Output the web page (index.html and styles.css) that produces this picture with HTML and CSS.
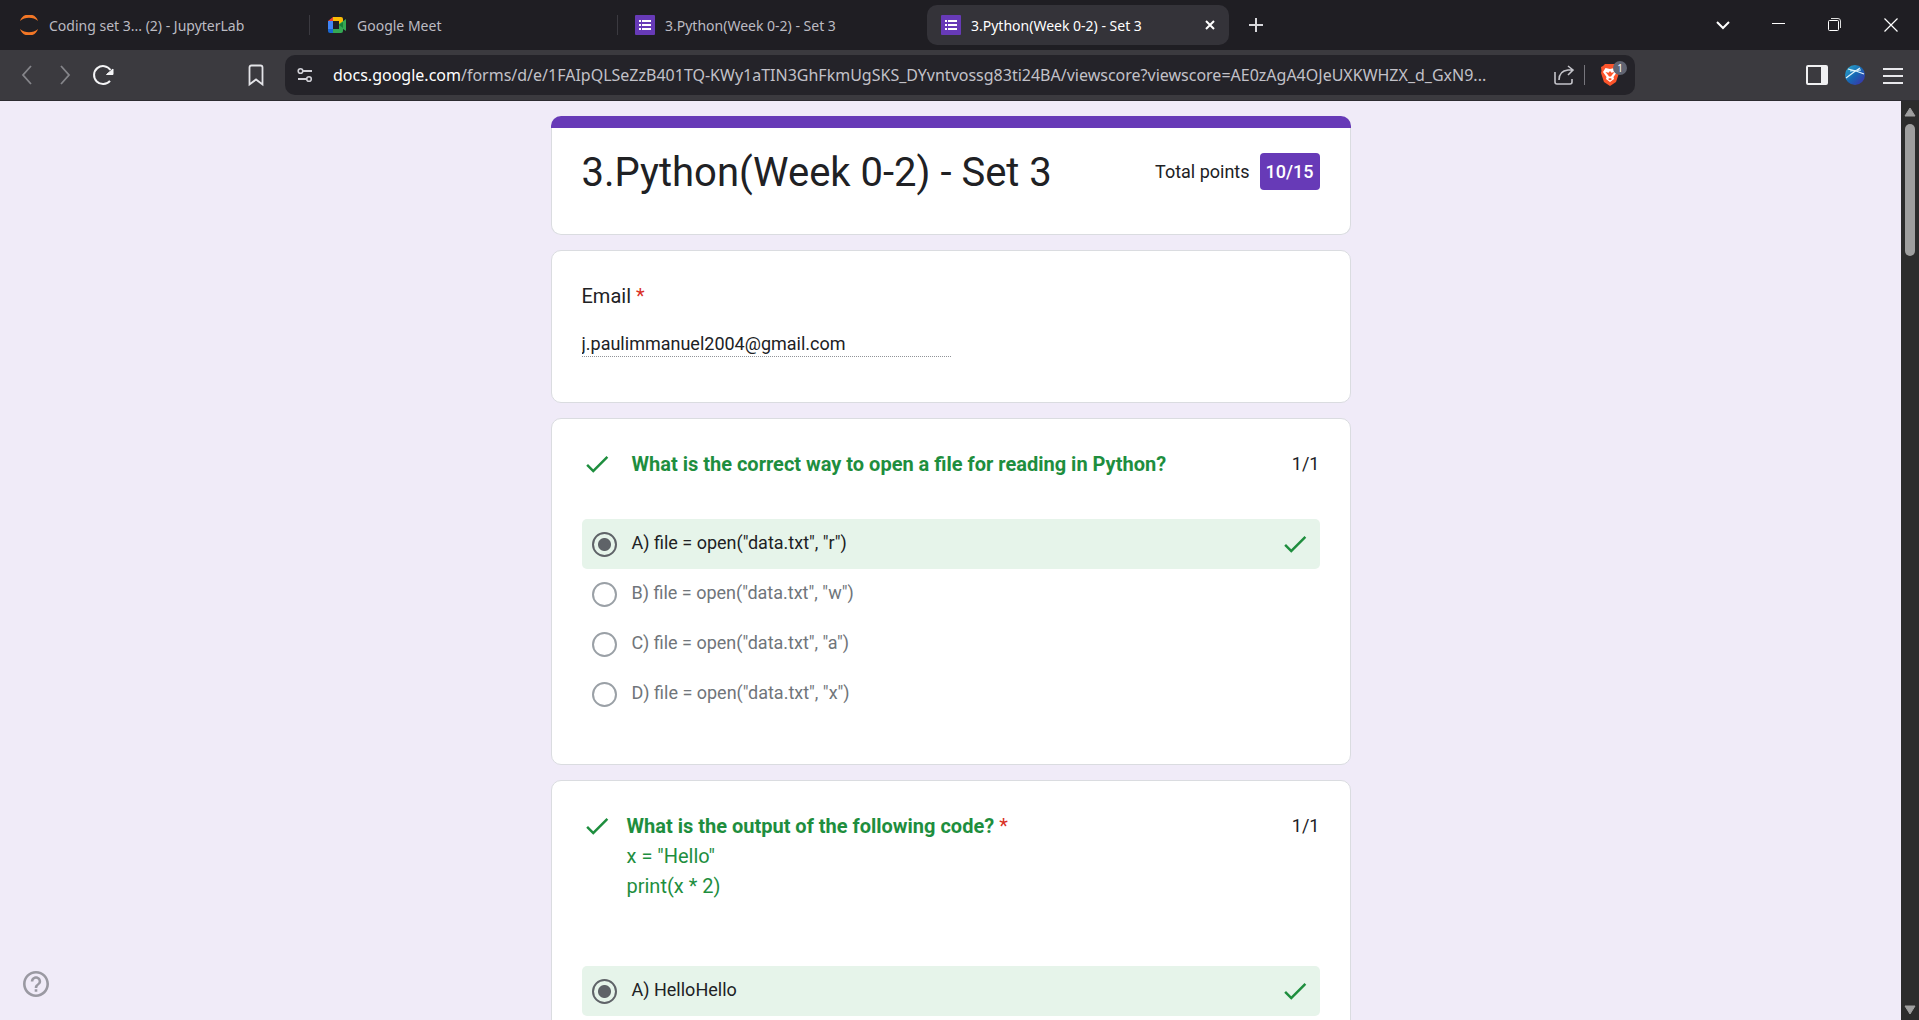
FILE: index.html
```html
<!DOCTYPE html>
<html lang="en">
<head>
<meta charset="utf-8">
<title>3.Python(Week 0-2) - Set 3</title>
<link rel="stylesheet" href="styles.css">
</head>
<body>
<svg class="defs" aria-hidden="true">
  <symbol id="form-icon" viewBox="0 0 20 20">
    <rect width="20" height="20" rx="1" fill="#673ab7"/>
    <path d="M7 5h9v2H7zM7 9h9v2H7zM7 13h9v2H7z" fill="#fff"/>
    <path d="M4 5h2v2H4zM4 9h2v2H4zM4 13h2v2H4z" fill="#fff"/>
  </symbol>
  <symbol id="check" viewBox="0 0 24 24">
    <path d="M9 16.2L4.8 12l-1.4 1.4L9 19 21 7l-1.4-1.4L9 16.2z" fill="#1e8e3e"/>
  </symbol>
</svg>

<header class="browser">
  <div class="tab-strip">
    <nav class="tabs" aria-label="Open tabs">
      <a class="tab" href="#">
        <svg class="favicon" viewBox="0 0 20 20"><path d="M1 6a9.500 9.500 0 0 1 18 0a14 14 0 0 0-18 0zM1 14a9.500 9.500 0 0 0 18 0a14 14 0 0 1-18 0z" fill="#f37726"/></svg>
        <span>Coding set 3... (2) - JupyterLab</span>
      </a>
      <a class="tab divided" href="#">
        <svg class="favicon" viewBox="0 0 20 20"><path d="M1 6l5-4v4z" fill="#ea4335"/><path d="M6 2h8a2 2 0 0 1 2 2v6l-4-1V6H6z" fill="#fbbc04"/><path d="M1 6h5v8H1z" fill="#4285f4"/><path d="M1 14h5v4H3a2 2 0 0 1-2-2z" fill="#1967d2"/><path d="M6 14h6V9l7-5v12l-3-2v2a2 2 0 0 1-2 2H6z" fill="#34a853"/><path d="M12 10l4-3v6z" fill="#188038"/></svg>
        <span>Google Meet</span>
      </a>
      <a class="tab divided" href="#">
        <svg class="favicon"><use href="#form-icon"/></svg>
        <span>3.Python(Week 0-2) - Set 3</span>
      </a>
      <div class="tab active">
        <svg class="favicon"><use href="#form-icon"/></svg>
        <span>3.Python(Week 0-2) - Set 3</span>
        <button class="icon-button close-tab" aria-label="Close tab"><svg viewBox="0 0 10 10"><path d="M1 1l8 8M9 1l-8 8" stroke="#fff" stroke-width="2"/></svg></button>
      </div>
      <button class="icon-button new-tab" aria-label="New tab"><svg viewBox="0 0 14 14"><path d="M7 0v14M0 7h14" stroke="#d8d8dc" stroke-width="2"/></svg></button>
    </nav>
    <div class="window-controls">
      <button class="icon-button" aria-label="Search tabs"><svg viewBox="0 0 14 14"><path d="M1 4l6 6 6-6" fill="none" stroke="#fff" stroke-width="2"/></svg></button>
      <button class="icon-button" aria-label="Minimize"><svg viewBox="0 0 14 14"><path d="M0 5.500h13" stroke="#fff"/></svg></button>
      <button class="icon-button" aria-label="Restore"><svg viewBox="0 0 14 14"><rect x=".5" y="2.500" width="10" height="10" rx="1" fill="none" stroke="#fff"/><path d="M3 .5h7q2.500 0 2.500 2.500v7" fill="none" stroke="#ddd"/></svg></button>
      <button class="icon-button" aria-label="Close window"><svg viewBox="0 0 14 14"><path d="M.5.5l13 13M13.500.5l-13 13" stroke="#fff" stroke-width="1.200"/></svg></button>
    </div>
  </div>

  <div class="toolbar">
    <div class="history">
      <button class="icon-button" aria-label="Back"><svg viewBox="0 0 20 20"><path d="M14 1L6 10l8 9" fill="none" stroke="#85858a" stroke-width="1.800"/></svg></button>
      <button class="icon-button" aria-label="Forward"><svg viewBox="0 0 20 20"><path d="M6 1l8 9-8 9" fill="none" stroke="#85858a" stroke-width="1.800"/></svg></button>
      <button class="icon-button" aria-label="Reload"><svg viewBox="0 0 20 20"><path d="M17 15.800A9 9 0 1 1 17.500 5" fill="none" stroke="#f4f4f6" stroke-width="2"/><path d="M20 4v5.500h-6.500z" fill="#f4f4f6" stroke="#f4f4f6" stroke-linejoin="round"/></svg></button>
      <button class="icon-button bookmark" aria-label="Bookmark"><svg viewBox="0 0 20 20"><path d="M3.500 2.500q0-2 2-2h9q2 0 2 2v17l-6.500-5-6.500 5z" fill="none" stroke="#e4e4e8" stroke-width="1.800"/></svg></button>
    </div>
    <div class="address">
      <button class="icon-button site" aria-label="Site information"><svg viewBox="0 0 16 16"><path d="M6 4h9M1 12h8" stroke="#d0d0d6" stroke-width="1.800"/><circle cx="3.500" cy="4" r="2.300" fill="none" stroke="#d0d0d6" stroke-width="1.600"/><circle cx="12" cy="12" r="2.300" fill="none" stroke="#d0d0d6" stroke-width="1.600"/></svg></button>
      <div class="url"><span class="host">docs.google.com</span>/forms/d/e/1FAIpQLSeZzB401TQ-KWy1aTIN3GhFkmUgSKS_DYvntvossg83ti24BA/viewscore?viewscore=AE0zAgA4OJeUXKWHZX_d_GxN9...</div>
      <button class="icon-button" aria-label="Share"><svg viewBox="0 0 20 20"><path d="M1 7v10q0 2 2 2h13q2 0 2-2v-3M5 15q0-9 9-10h4M14 1l5 4-5 5" fill="none" stroke="#c4c4ca" stroke-width="1.600"/></svg></button>
      <span class="rule"></span>
      <button class="icon-button shield" aria-label="Brave Shields"><svg viewBox="0 0 20 22"><path d="M5 0h10l2 2 2 1-.5 4 .5 2-3 9-6 4-6-4-3-9 .5-2L1 3l2-1z" fill="#fb542b"/><path d="M5.500 4L10 5l4.500-1L17 8l-3.500 5 .5 2-4 3-4-3 .5-2L3 8z" fill="#fff"/><path d="M5.500 8l3 .8L10 7l1.500 1.800 3-.8-2.500 3-1 1.500h-2L8 11zM8 15l2-1 2 1-2 1.500z" fill="#fb542b"/></svg><span class="badge">1</span></button>
    </div>
    <div class="tools">
      <button class="icon-button" aria-label="Sidebar"><svg viewBox="0 0 20 20"><rect x="0" y="1" width="20" height="18" rx="1" fill="none" stroke="#f0f0f2" stroke-width="2"/><path d="M14 1h6v18h-6z" fill="#f0f0f2"/></svg></button>
      <button class="icon-button" aria-label="Profile"><svg viewBox="0 0 20 20"><defs><linearGradient id="globe" x1="0" y1="0" x2="1" y2="1"><stop offset="0" stop-color="#2fb0d0"/><stop offset=".5" stop-color="#1768b4"/><stop offset="1" stop-color="#4328a8"/></linearGradient></defs><circle cx="10" cy="10" r="10" fill="url(#globe)"/><path d="M3 4l8 2 8 3M1 13l8-6 6-4M5 6l11-1" fill="none" stroke="#dff3fa" stroke-width="1.200"/></svg></button>
      <button class="icon-button" aria-label="Menu"><svg viewBox="0 0 20 20"><path d="M0 4h20M0 11h20M0 18h20" stroke="#e8e8ec" stroke-width="2"/></svg></button>
    </div>
  </div>
</header>

<div class="viewport">
  <main class="page">
    <form class="form">
      <section class="card title-card">
        <h1>3.Python(Week 0-2) - Set 3</h1>
        <div class="score">Total points <strong>10/15</strong></div>
      </section>

      <section class="card email-card">
        <label class="question" for="email">Email <span class="required">*</span></label>
        <input id="email" class="email" type="email" value="j.paulimmanuel2004@gmail.com" readonly>
      </section>

      <section class="card">
        <div class="heading wide">
          <svg class="check"><use href="#check"/></svg>
          <h2>What is the correct way to open a file for reading in Python?</h2>
          <span class="points">1/1</span>
        </div>
        <div class="options">
          <label class="option correct"><input type="radio" name="q1" checked><span>A) file = open("data.txt", "r")</span><svg class="check"><use href="#check"/></svg></label>
          <label class="option"><input type="radio" name="q1"><span>B) file = open("data.txt", "w")</span></label>
          <label class="option"><input type="radio" name="q1"><span>C) file = open("data.txt", "a")</span></label>
          <label class="option"><input type="radio" name="q1"><span>D) file = open("data.txt", "x")</span></label>
        </div>
      </section>

      <section class="card">
        <div class="heading">
          <svg class="check"><use href="#check"/></svg>
          <div class="prompt">
            <h2>What is the output of the following code? <span class="required">*</span></h2>
            <p>x = "Hello"</p>
            <p>print(x * 2)</p>
          </div>
          <span class="points">1/1</span>
        </div>
        <div class="options after-code">
          <label class="option correct"><input type="radio" name="q2" checked><span>A) HelloHello</span><svg class="check"><use href="#check"/></svg></label>
        </div>
      </section>
    </form>
    <button class="icon-button help" aria-label="Help"><svg viewBox="2 2 20 20"><path fill="#9a99a2" d="M11 18h2v-2h-2v2zm1-16C6.480 2 2 6.480 2 12s4.480 10 10 10 10-4.480 10-10S17.520 2 12 2zm0 18c-4.410 0-8-3.590-8-8s3.590-8 8-8 8 3.590 8 8-3.590 8-8 8zm0-14c-2.210 0-4 1.790-4 4h2c0-1.100.9-2 2-2s2 .9 2 2c0 2-3 1.750-3 5h2c0-2.250 3-2.500 3-5 0-2.210-1.790-4-4-4z"/></svg></button>
  </main>
  <div class="scrollbar" aria-hidden="true">
    <svg viewBox="0 0 12 10"><path d="M6 1l5 8H1z" fill="#9f9f9f" stroke="#9f9f9f" stroke-linejoin="round"/></svg>
    <div class="thumb"></div>
    <svg viewBox="0 0 12 10"><path d="M6 9l5-8H1z" fill="#9f9f9f" stroke="#9f9f9f" stroke-linejoin="round"/></svg>
  </div>
</div>
</body>
</html>
```
FILE: styles.css
```css
* { box-sizing: border-box; }

body {
  margin: 0;
  height: 100vh;
  display: flex;
  flex-direction: column;
  overflow: hidden;
  font-family: Roboto, "Liberation Sans", sans-serif;
  color: #202124;
}

h1, h2, p { margin: 0; font-weight: 400; }

.defs { position: absolute; width: 0; height: 0; }

.icon-button {
  display: flex;
  align-items: center;
  justify-content: center;
  flex: none;
  width: 20px;
  height: 24px;
  padding: 0;
  border: 0;
  background: none;
}
.icon-button svg { width: 20px; height: 20px; overflow: visible; }

/* Browser frame */
.browser { flex: none; font-family: "Noto Sans", sans-serif; }

.tab-strip {
  display: flex;
  justify-content: space-between;
  height: 50px;
  padding: 5px 18px 5px 0;
  background: #1f1e23;
}
.tabs { display: flex; align-items: center; }
.tab {
  position: relative;
  display: flex;
  align-items: center;
  gap: 10px;
  width: 308px;
  height: 40px;
  padding: 0 14px 0 19px;
  color: #bcbbc2;
  font-size: 14px;
  text-decoration: none;
  white-space: nowrap;
}
.tab.divided::before {
  content: "";
  position: absolute;
  left: 1px;
  top: 10px;
  width: 1px;
  height: 20px;
  background: #3b3a40;
}
.tab.active {
  width: 302px;
  margin-left: 3px;
  padding-left: 14px;
  border-radius: 10px;
  background: #343339;
  color: #fff;
}
.favicon { flex: none; width: 20px; height: 20px; }
.close-tab { width: 10px; margin-left: auto; }
.close-tab svg { width: 10px; height: 10px; }
.new-tab { margin-left: 17px; }
.new-tab svg, .window-controls svg { width: 14px; height: 14px; }
.window-controls { display: flex; align-items: center; gap: 36px; }

.toolbar {
  display: flex;
  align-items: center;
  gap: 19px;
  height: 51px;
  padding: 0 16px 0 17px;
  border-bottom: 1px solid #2c2b30;
  background: #3b3a3f;
}
.history { display: flex; gap: 18px; flex: 1; }
.bookmark { margin-left: auto; }
.address {
  display: flex;
  align-items: center;
  flex: 0 1 1350px;
  min-width: 0;
  height: 40px;
  gap: 10px;
  padding: 0 7px 0 12px;
  border-radius: 10px;
  background: #242329;
}
.site { width: 16px; }
.site svg { width: 16px; height: 16px; }
.url {
  flex: 1;
  min-width: 0;
  padding-left: 10px;
  overflow: hidden;
  white-space: nowrap;
  color: #c2c1c8;
  font-size: 16px;
}
.host { color: #fff; }
.rule { width: 1px; height: 20px; margin-right: 5px; background: #77767d; }
.shield { position: relative; width: 28px; justify-content: flex-start; }
.shield svg { height: 22px; }
.badge {
  position: absolute;
  left: 13px;
  top: -2px;
  width: 14px;
  height: 14px;
  border-radius: 7px;
  background: #606472;
  color: #fff;
  font: 10px/14px "Noto Sans", sans-serif;
}
.tools { display: flex; justify-content: flex-end; gap: 18px; flex: 1; }

/* Form page */
.viewport { display: flex; flex: 1; min-height: 0; }
.page {
  position: relative;
  flex: 1;
  padding-top: 15px;
  overflow: hidden;
  background: #f0ebf8;
}
.form {
  display: flex;
  flex-direction: column;
  gap: 15px;
  max-width: 800px;
  margin: 0 auto;
}
.card {
  padding: 30px;
  border: 1px solid #dadce0;
  border-radius: 10px;
  background: #fff;
}
.title-card {
  position: relative;
  display: flex;
  align-items: flex-start;
  justify-content: space-between;
  min-height: 119px;
  padding-top: 32px;
  border-top: 0;
}
.title-card::before {
  content: "";
  position: absolute;
  top: 0;
  left: -1px;
  right: -1px;
  height: 12px;
  border-radius: 10px 10px 0 0;
  background: #673ab7;
}
h1 { font-size: 40px; line-height: 50px; }
.score {
  display: flex;
  align-items: center;
  gap: 10px;
  margin-top: 5px;
  font-size: 18px;
}
.score strong {
  padding: 0 6px;
  border-radius: 4px;
  background: #673ab7;
  color: #fff;
  font-weight: 500;
  line-height: 37px;
}
.email-card { display: flex; flex-direction: column; align-items: flex-start; min-height: 153px; }
.question { font-size: 20px; line-height: 30px; }
.required { color: #d93025; font-weight: 400; }
.email {
  width: 50%;
  max-width: 369px;
  height: 31px;
  margin-top: 15px;
  padding: 5px 0 0;
  border: 0;
  border-bottom: 1px dotted #909398;
  outline: 0;
  color: #202124;
  font: 18px Roboto, "Liberation Sans", sans-serif;
}
.heading { display: flex; align-items: flex-start; gap: 15px; line-height: 30px; font-size: 20px; }
.heading.wide { gap: 20px; }
.heading h2 { flex: 1; font-size: 20px; font-weight: 700; color: #1e8e3e; }
.prompt { flex: 1; color: #1e8e3e; }
.points { font-size: 18px; }
.check { flex: none; width: 30px; height: 30px; }
.options { padding: 40px 0 15px; }
.options.after-code { padding-top: 65px; }
.option {
  display: flex;
  align-items: center;
  height: 50px;
  padding: 0 10px;
  border-radius: 5px;
  color: #70757a;
  font-size: 18px;
}
.option span { flex: 1; padding-bottom: 3px; }
.option.correct { background: #e6f4ea; color: #202124; }
.option input {
  appearance: none;
  flex: none;
  width: 25px;
  height: 25px;
  margin: 0 15px 0 0;
  border: 2px solid #9aa0a6;
  border-radius: 50%;
}
.option input:checked {
  border-color: #5f6368;
  background: radial-gradient(circle, #5f6368 6px, transparent 7px);
}
.help { position: absolute; left: 23px; bottom: 23px; width: 26px; height: 26px; }
.help svg { width: 26px; height: 26px; }

.scrollbar {
  display: flex;
  flex-direction: column;
  align-items: center;
  flex: none;
  width: 18px;
  padding: 6px 0 5px;
  background: #2c2c2c;
}
.scrollbar svg { width: 12px; height: 10px; }
.thumb { width: 10px; height: 132px; margin: 7px 0 auto; border-radius: 5px; background: #9f9f9f; }
```
